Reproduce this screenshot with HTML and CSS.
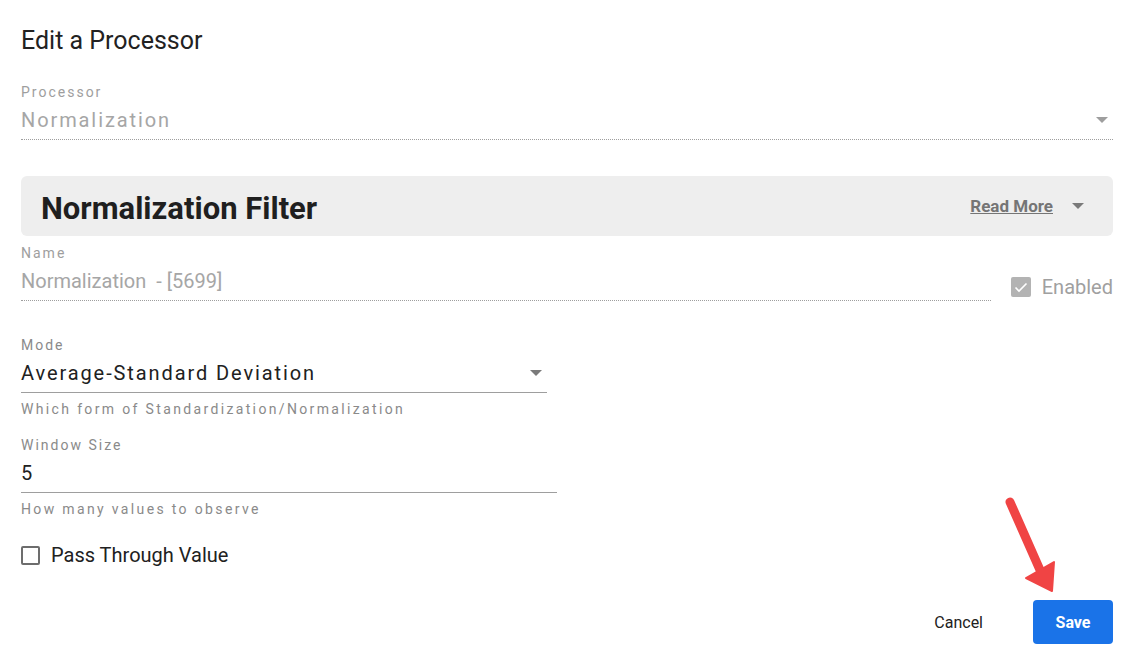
FILE: index.html
```html
<!DOCTYPE html>
<html lang="en">
<head>
    <meta charset="UTF-8">
    <meta name="viewport" content="width=device-width, initial-scale=1">
    <title>Edit a Processor</title>
    <link rel="stylesheet" href="styles.css">
</head>
<body>

<div class="dialog">
    <h1 class="title">Edit a Processor</h1>

    <div class="field field-disabled processor">
        <label class="label">Processor</label>
        <div class="select dotted">
            <span class="value wide">Normalization</span>
            <span class="caret"></span>
        </div>
    </div>

    <div class="panel">
        <h2 class="panel-title">Normalization Filter</h2>
        <div class="panel-more">
            <a href="#">Read More</a>
            <span class="caret"></span>
        </div>
    </div>

    <div class="name-row">
        <div class="field field-disabled grow">
            <label class="label">Name</label>
            <div class="select dotted">
                <span class="value">Normalization&nbsp; - [5699]</span>
            </div>
        </div>
        <label class="check check-disabled">
            <span class="box checked">
                <svg viewBox="0 0 20 20" width="20" height="20"><path d="M4.5 10.5l3.5 3.5 7.5-7.5" fill="none" stroke="#fff" stroke-width="1.6"/></svg>
            </span>
            Enabled
        </label>
    </div>

    <div class="field mode">
        <label class="label">Mode</label>
        <div class="select solid">
            <span class="value wide">Average-Standard Deviation</span>
            <span class="caret"></span>
        </div>
        <p class="hint">Which form of Standardization/Normalization</p>
    </div>

    <div class="field size">
        <label class="label">Window Size</label>
        <div class="select solid">
            <span class="value">5</span>
        </div>
        <p class="hint">How many values to observe</p>
    </div>

    <label class="check pass">
        <span class="box"></span>
        Pass Through Value
    </label>

    <div class="actions">
        <button class="btn btn-text">Cancel</button>
        <button class="btn btn-primary">Save</button>
    </div>
</div>

<!-- pointer toward the save button -->
<svg class="pointer" width="80" height="120" viewBox="0 0 80 120">
    <line x1="10" y1="12" x2="40" y2="80" stroke="#f04444" stroke-width="9" stroke-linecap="round"/>
    <polygon points="26,88 54,72 52,101" fill="#f04444" stroke="#f04444" stroke-width="2" stroke-linejoin="round"/>
</svg>

</body>
</html>
```

FILE: styles.css
```css
* { box-sizing: border-box; }
body { margin: 0; background: #fff; font-family: Roboto, "Noto Sans", sans-serif; color: #212121; }

.dialog { position: relative; padding: 25px 23px 18px 21px; }
.title { margin: 0; font-size: 25px; font-weight: 400; line-height: 32px; color: #222; }

.field { display: flex; flex-direction: column; }
.processor { margin-top: 26px; }
.label { font-size: 14px; letter-spacing: 2px; color: #8a8a8a; line-height: 18px; }
.field-disabled .label { color: #9e9e9e; }
.select { display: flex; align-items: center; justify-content: space-between; height: 39px; }
.dotted { border-bottom: 1px dotted #9e9e9e; }
.solid { border-bottom: 1px solid #9e9e9e; }
.value { font-size: 20px; line-height: 24px; color: #212121; }
.value.wide { letter-spacing: 1.9px; }
.field-disabled .value { color: #a6a6a6; }
.caret { width: 0; height: 0; border-left: 6px solid transparent; border-right: 6px solid transparent; border-top: 6px solid #7a7a7a; margin-right: 5px; }
.field-disabled .caret { border-top-color: #9e9e9e; }

.panel { display: flex; align-items: center; justify-content: space-between; margin-top: 36px; height: 60px; padding: 0 29px 0 20px; background: #eee; border-radius: 6px; }
.panel-title { margin: 0; padding-top: 5px; font-size: 31px; font-weight: 700; color: #1f1f1f; }
.panel-more { display: flex; align-items: center; gap: 19px; }
.panel-more a { font-size: 17px; font-weight: 700; color: #757575; text-decoration: underline; }
.panel-more .caret { margin: 0; border-top-color: #7a7a7a; }

.name-row { display: flex; align-items: flex-end; gap: 20px; margin-top: 8px; }
.grow { flex: 1; }
.check { display: flex; align-items: center; gap: 11px; font-size: 20px; line-height: 24px; }
.check-disabled { color: #a0a0a0; margin-bottom: 2px; }
.box { display: flex; width: 19px; height: 19px; border: 2px solid #6d6d6d; border-radius: 2px; }
.box.checked { width: 20px; height: 20px; border: none; background: #b3b3b3; }

.mode { width: 526px; margin-top: 35px; }
.size { width: 536px; margin-top: 18px; }
.hint { margin: 7px 0 0; font-size: 14px; letter-spacing: 2.35px; color: #8a8a8a; line-height: 18px; }

.pass { margin-top: 25px; }

.actions { display: flex; justify-content: flex-end; align-items: center; gap: 30px; margin-top: 33px; }
.btn { font-family: inherit; font-size: 16px; border: none; cursor: pointer; }
.btn-text { background: none; color: #212121; padding: 0 20px; }
.btn-primary { width: 80px; height: 44px; background: #1a73e8; color: #fff; font-weight: 700; border-radius: 4px; }

.pointer { position: absolute; left: 1000px; top: 490px; }
```
